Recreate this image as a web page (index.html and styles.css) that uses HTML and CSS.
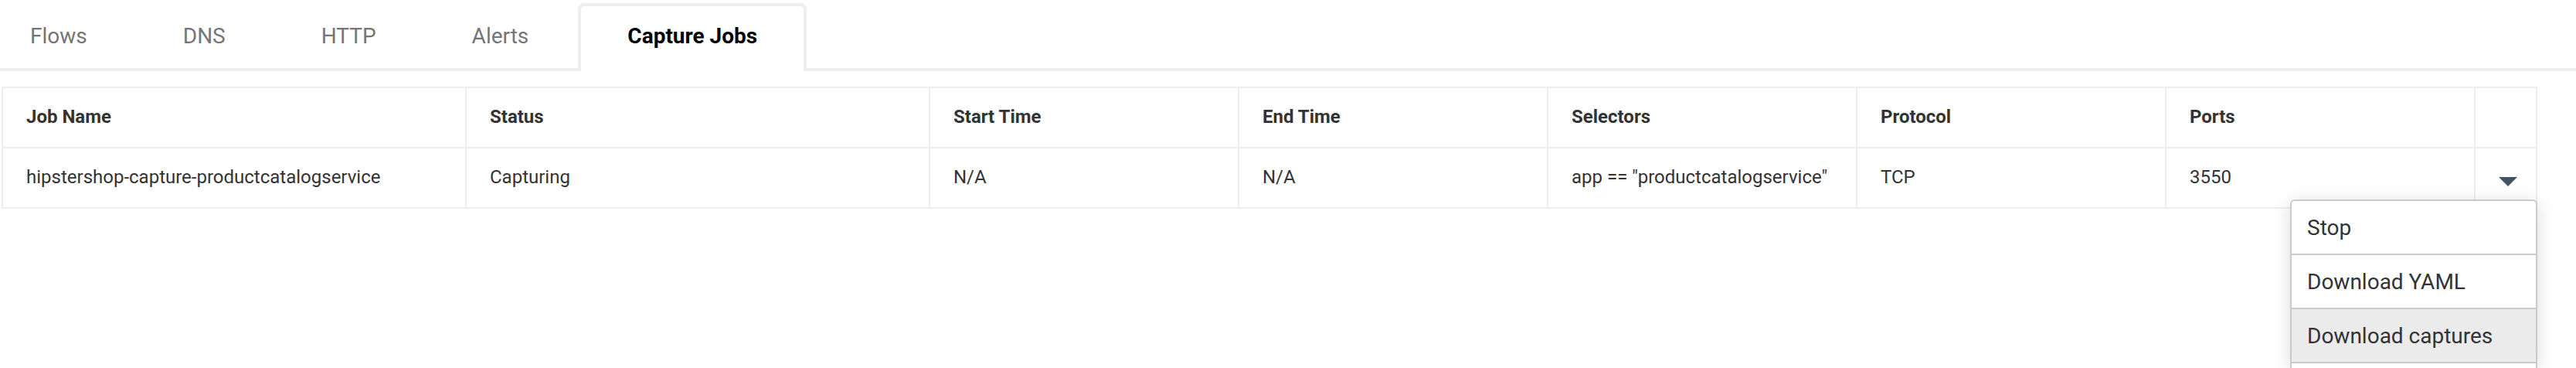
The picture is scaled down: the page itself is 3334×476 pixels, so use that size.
FILE: index.html
```html
<!DOCTYPE html>
<html lang="en">
<head>
<meta charset="utf-8">
<title>Capture Jobs</title>
<link rel="stylesheet" href="styles.css">
</head>
<body>
<div class="tabs">
  <div class="tab first">Flows</div>
  <div class="tab">DNS</div>
  <div class="tab">HTTP</div>
  <div class="tab">Alerts</div>
  <div class="tab active">Capture Jobs</div>
</div>
<div class="jobs">
  <div class="cell head">Job Name</div>
  <div class="cell head">Status</div>
  <div class="cell head">Start Time</div>
  <div class="cell head">End Time</div>
  <div class="cell head">Selectors</div>
  <div class="cell head">Protocol</div>
  <div class="cell head">Ports</div>
  <div class="cell head"></div>

  <div class="cell">hipstershop-capture-productcatalogservice</div>
  <div class="cell">Capturing</div>
  <div class="cell">N/A</div>
  <div class="cell">N/A</div>
  <div class="cell">app == "productcatalogservice"</div>
  <div class="cell">TCP</div>
  <div class="cell">3550</div>
  <div class="cell actions">
    <svg class="caret" width="24" height="12" viewBox="0 0 24 12"><path d="M0 0 L24 0 L12 12 Z" fill="#435366"/></svg>
    <div class="menu">
      <div class="item">Stop</div>
      <div class="item">Download YAML</div>
      <div class="item hover">Download captures</div>
      <div class="item blank"></div>
    </div>
  </div>
</div>
</body>
</html>
```
FILE: styles.css
```css
* { box-sizing: border-box; }
html, body { margin: 0; padding: 0; background: #fff; }
body {
  font-family: Roboto, "Liberation Sans", sans-serif;
  color: #333;
  min-height: 476px;
}
.tabs {
  display: flex;
  padding-top: 4px;
  border-bottom: 4px solid #eeeeee;
}
.tab {
  font-size: 28px;
  line-height: 32px;
  color: #757575;
  padding: 23px 58px 29px;
  border: 4px solid transparent;
  border-bottom: none;
  margin-bottom: -4px;
  white-space: nowrap;
}
.tab.first { padding-left: 35px; }
.tab.active {
  color: #000;
  font-weight: 700;
  background: #fff;
  border-color: #eeeeee;
  border-radius: 8px 8px 0 0;
  padding-left: 60px;
  padding-right: 60px;
  margin-left: 2px;
}
.jobs {
  display: grid;
  grid-template-columns: 600px 600px 400px 400px 400px 400px 400px 80px;
  width: max-content;
  margin: 20px 0 0 2px;
  border-top: 2px solid #eeeeee;
  border-left: 2px solid #eeeeee;
}
.cell {
  font-size: 24px;
  line-height: 28px;
  padding: 23px 30px 25px;
  border-right: 2px solid #eeeeee;
  border-bottom: 2px solid #eeeeee;
  white-space: nowrap;
}
.cell.head { font-weight: 700; }
.actions {
  position: relative;
  padding: 37px 0 0 30px;
}
.caret { display: block; }
.menu {
  position: absolute;
  top: 66px;
  right: -2px;
  width: 320px;
  background: #fff;
  border: 2px solid #cacaca;
  border-bottom: none;
  border-radius: 6px 6px 0 0;
  box-shadow: 0 4px 24px rgba(0, 0, 0, 0.14);
  z-index: 2;
}
.item {
  font-size: 28px;
  line-height: 32px;
  padding: 19px 20px 17px;
  color: #333;
  border-bottom: 2px solid #cacaca;
  white-space: nowrap;
}
.item.hover { background: #ebebeb; }
.item.blank { height: 6px; padding: 0; border-bottom: none; }
```
